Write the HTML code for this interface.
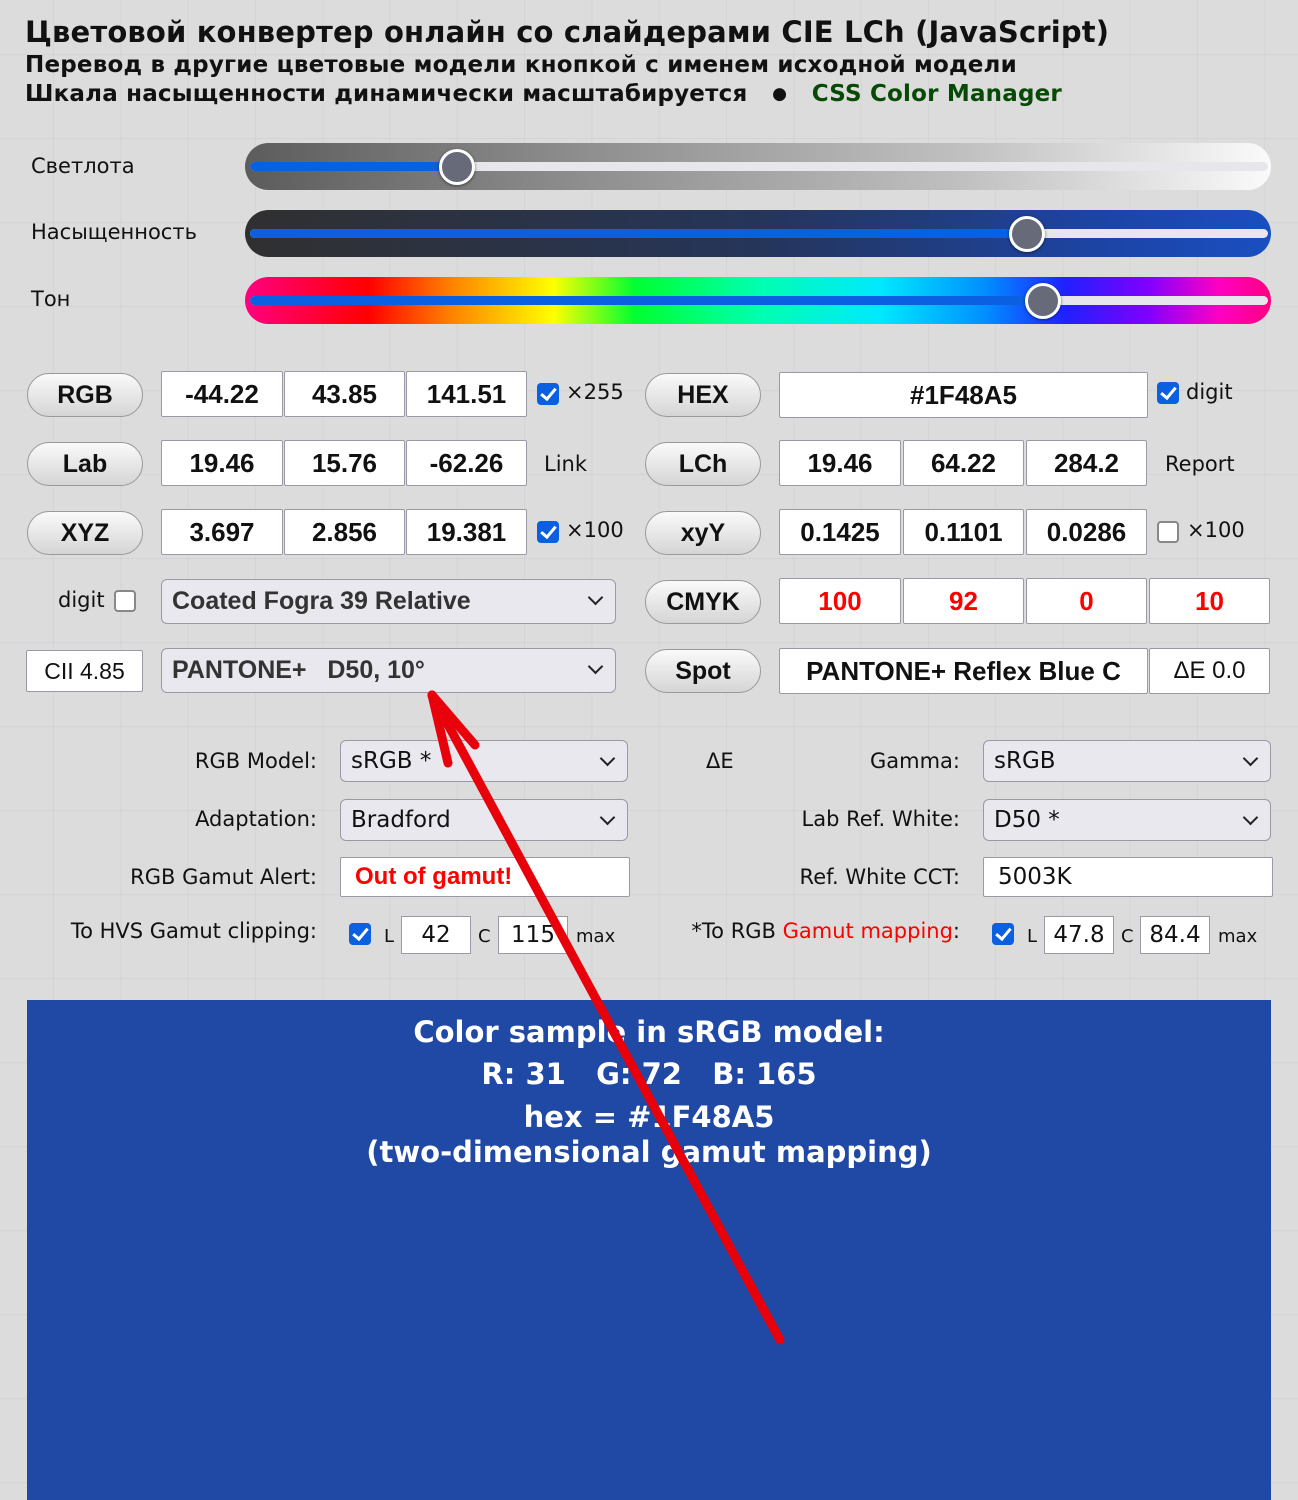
<!DOCTYPE html>
<html><head><meta charset="utf-8"><style>
*{box-sizing:border-box;margin:0;padding:0}
body{width:1298px;height:1500px;position:relative;overflow:hidden;background-color:#dcdcdc;
background-image:linear-gradient(90deg,rgba(0,0,0,.035) 1px,transparent 1px),linear-gradient(rgba(0,0,0,.035) 1px,transparent 1px);
background-size:67.3px 84px;background-position:53px 54px;font-family:"DejaVu Sans","Liberation Sans",sans-serif;color:#111}
.a{position:absolute;white-space:nowrap}
.h{font-weight:bold;left:25px}
.lbl{font-size:21px}
.track{position:absolute;left:245px;width:1026px;height:47px;border-radius:24px}
.line{position:absolute;left:5px;right:3px;top:19px;height:9px;border-radius:5px;background:#e6e6ec}
.fill{position:absolute;left:0;top:0;height:9px;border-radius:5px;background:#0a60e0}
.thumb{position:absolute;top:6px;width:36px;height:36px;border-radius:50%;background:#676a78;border:3px solid #fff;box-shadow:0 1px 3px rgba(0,0,0,.5)}
.btn{position:absolute;width:116px;height:44px;border-radius:22px;border:1px solid #999;background:linear-gradient(#fafafa,#d5d5d5);font:bold 25px "Liberation Sans",sans-serif;text-align:center;line-height:42px}
.in{position:absolute;height:46px;background:#fff;border:1px solid #9a9aa6;border-radius:2px;font:bold 26px "Liberation Sans",sans-serif;text-align:center;line-height:44px}
.red{color:#f00}
.sel{position:absolute;height:42px;background:#e8e8ee;border:1px solid #9a9aa6;border-radius:6px;font-size:23px;line-height:40px;padding-left:10px}
.sel:after{content:"";position:absolute;right:14px;top:12px;width:9px;height:9px;border-right:2px solid #222;border-bottom:2px solid #222;transform:rotate(45deg)}
.sel.nob:after{display:none}
.cb{position:absolute;width:22px;height:22px;border-radius:4px;background:#0a60e0}
.cb:after{content:"";position:absolute;left:7px;top:2px;width:6px;height:12px;border-right:3px solid #fff;border-bottom:3px solid #fff;transform:rotate(40deg)}
.ce{position:absolute;width:22px;height:22px;border-radius:4px;background:#fff;border:2px solid #888}
.f{font-size:21px}
.r{text-align:right}
.sm{position:absolute;height:38px;background:#fff;border:1px solid #9a9aa6;font-size:23px;text-align:center;line-height:36px}
</style></head><body>
<div class="a h" style="top:15px;font-size:29px;letter-spacing:0.15px">Цветовой конвертер онлайн со слайдерами CIE LCh (JavaScript)</div>
<div class="a h" style="top:52px;font-size:23px;letter-spacing:0.2px">Перевод в другие цветовые модели кнопкой с именем исходной модели</div>
<div class="a h" style="top:81px;font-size:23px;letter-spacing:0.2px">Шкала насыщенности динамически масштабируется &nbsp;&nbsp;<span style="font-size:17px;vertical-align:2px">●</span>&nbsp;&nbsp; <span style="color:#064a06">CSS Color Manager</span></div>

<div class="a lbl" style="left:31px;top:154px">Светлота</div>
<div class="a lbl" style="left:31px;top:220px">Насыщенность</div>
<div class="a lbl" style="left:31px;top:287px">Тон</div>
<div class="track" style="top:143px;background:linear-gradient(90deg,#5c5c5c,#8a8a8a 30%,#c0c0c0 70%,#fafafa)"><div class="line"><div class="fill" style="width:210px"></div></div><div class="thumb" style="left:194px"></div></div>
<div class="track" style="top:210px;background:linear-gradient(90deg,#303030,#25355a 50%,#1c45a8 85%,#1a4fc0)"><div class="line"><div class="fill" style="width:780px"></div></div><div class="thumb" style="left:764px"></div></div>
<div class="track" style="top:277px;background:linear-gradient(90deg,#ff0080,#ff0000 12%,#ff8000 20%,#ffff00 30%,#00ff30 38%,#00ffb0 50%,#00e8ff 62%,#0090ff 72%,#2020ff 80%,#8000ff 88%,#ff00c0 95%,#ff0080)"><div class="line"><div class="fill" style="width:796px"></div></div><div class="thumb" style="left:780px"></div></div>

<div class="btn" style="left:27px;top:373px">RGB</div>
<div class="in" style="left:161px;top:371px;width:122px">-44.22</div>
<div class="in" style="left:284px;top:371px;width:121px">43.85</div>
<div class="in" style="left:406px;top:371px;width:121px">141.51</div>
<div class="cb" style="left:537px;top:383px"></div><div class="a f" style="left:566px;top:380px">×255</div>
<div class="btn" style="left:645px;top:373px">HEX</div>
<div class="in" style="left:779px;top:372px;width:369px">#1F48A5</div>
<div class="cb" style="left:1157px;top:382px"></div><div class="a f" style="left:1186px;top:380px">digit</div>

<div class="btn" style="left:27px;top:442px">Lab</div>
<div class="in" style="left:161px;top:440px;width:122px">19.46</div>
<div class="in" style="left:284px;top:440px;width:121px">15.76</div>
<div class="in" style="left:406px;top:440px;width:121px">-62.26</div>
<div class="a f" style="left:544px;top:452px">Link</div>
<div class="btn" style="left:645px;top:442px">LCh</div>
<div class="in" style="left:779px;top:440px;width:122px">19.46</div>
<div class="in" style="left:903px;top:440px;width:121px">64.22</div>
<div class="in" style="left:1026px;top:440px;width:121px">284.2</div>
<div class="a f" style="left:1165px;top:452px">Report</div>

<div class="btn" style="left:27px;top:511px">XYZ</div>
<div class="in" style="left:161px;top:509px;width:122px">3.697</div>
<div class="in" style="left:284px;top:509px;width:121px">2.856</div>
<div class="in" style="left:406px;top:509px;width:121px">19.381</div>
<div class="cb" style="left:537px;top:521px"></div><div class="a f" style="left:566px;top:518px">×100</div>
<div class="btn" style="left:645px;top:511px">xyY</div>
<div class="in" style="left:779px;top:509px;width:122px">0.1425</div>
<div class="in" style="left:903px;top:509px;width:121px">0.1101</div>
<div class="in" style="left:1026px;top:509px;width:121px">0.0286</div>
<div class="ce" style="left:1157px;top:521px"></div><div class="a f" style="left:1187px;top:518px">×100</div>

<div class="a f" style="left:58px;top:588px">digit</div><div class="ce" style="left:114px;top:590px"></div>
<div class="sel" style="left:161px;top:579px;width:455px;height:45px;font:bold 25px 'Liberation Sans',sans-serif;line-height:43px;color:#333">Coated Fogra 39 Relative</div>
<div class="btn" style="left:645px;top:580px">CMYK</div>
<div class="in red" style="left:779px;top:578px;width:122px">100</div>
<div class="in red" style="left:903px;top:578px;width:121px">92</div>
<div class="in red" style="left:1026px;top:578px;width:121px">0</div>
<div class="in red" style="left:1149px;top:578px;width:121px">10</div>

<div class="in" style="left:26px;top:650px;width:117px;height:42px;font:23px 'Liberation Sans',sans-serif;line-height:40px">CII 4.85</div>
<div class="sel" style="left:161px;top:648px;width:455px;height:45px;font:bold 25px 'Liberation Sans',sans-serif;line-height:43px;color:#333">PANTONE+ &nbsp; D50, 10°</div>
<div class="btn" style="left:645px;top:649px">Spot</div>
<div class="in" style="left:779px;top:648px;width:369px">PANTONE+ Reflex Blue C</div>
<div class="in" style="left:1149px;top:648px;width:121px;font-weight:normal;font-size:24px">ΔE 0.0</div>

<div class="a f r" style="right:981px;top:749px">RGB Model:</div>
<div class="sel" style="left:340px;top:740px;width:288px">sRGB *</div>
<div class="a f" style="left:706px;top:749px">ΔE</div>
<div class="a f r" style="right:338px;top:749px">Gamma:</div>
<div class="sel" style="left:983px;top:740px;width:288px">sRGB</div>

<div class="a f r" style="right:981px;top:807px">Adaptation:</div>
<div class="sel" style="left:340px;top:799px;width:288px">Bradford</div>
<div class="a f r" style="right:338px;top:807px">Lab Ref. White:</div>
<div class="sel" style="left:983px;top:799px;width:288px">D50 *</div>

<div class="a f r" style="right:981px;top:865px">RGB Gamut Alert:</div>
<div class="sel nob" style="left:340px;top:857px;width:290px;height:40px;background:#fff;border-radius:2px;color:#f00;font:bold 24px 'Liberation Sans',sans-serif;line-height:38px;padding-left:14px">Out of gamut!</div>
<div class="a f r" style="right:338px;top:865px">Ref. White CCT:</div>
<div class="sel nob" style="left:983px;top:857px;width:290px;height:40px;background:#fff;border-radius:2px;padding-left:14px;line-height:38px">5003K</div>

<div class="a f r" style="right:981px;top:919px">To HVS Gamut clipping:</div>
<div class="cb" style="left:349px;top:923px"></div>
<div class="a" style="left:384px;top:926px;font-size:18px">L</div>
<div class="sm" style="left:401px;top:916px;width:70px">42</div>
<div class="a" style="left:478px;top:926px;font-size:18px">C</div>
<div class="sm" style="left:498px;top:916px;width:70px">115</div>
<div class="a" style="left:576px;top:926px;font-size:18px">max</div>
<div class="a f r" style="right:338px;top:919px">*To RGB <span style="color:#f00">Gamut mapping</span>:</div>
<div class="cb" style="left:992px;top:923px"></div>
<div class="a" style="left:1027px;top:926px;font-size:18px">L</div>
<div class="sm" style="left:1044px;top:916px;width:70px">47.8</div>
<div class="a" style="left:1121px;top:926px;font-size:18px">C</div>
<div class="sm" style="left:1140px;top:916px;width:70px">84.4</div>
<div class="a" style="left:1218px;top:926px;font-size:18px">max</div>

<div class="a" style="left:27px;top:1000px;width:1244px;height:500px;background:#2048a5;color:#fff;font-weight:bold;text-align:center;font-size:29px;line-height:42px;padding-top:11px;white-space:normal">
Color sample in sRGB model:<br>R: 31 &nbsp; G: 72 &nbsp; B: 165<br><span style="line-height:44px">hex = #1F48A5</span><br><span style="display:block;margin-top:-8px">(two-dimensional gamut mapping)</span></div>

<svg class="a" style="left:0;top:0" width="1298" height="1500">
<g stroke="#e8000a" stroke-width="9" stroke-linecap="round" fill="none">
<line x1="780" y1="1340" x2="432" y2="695"/>
<line x1="432" y1="695" x2="448" y2="763"/>
<line x1="432" y1="695" x2="475" y2="745"/>
</g></svg>
</body></html>
